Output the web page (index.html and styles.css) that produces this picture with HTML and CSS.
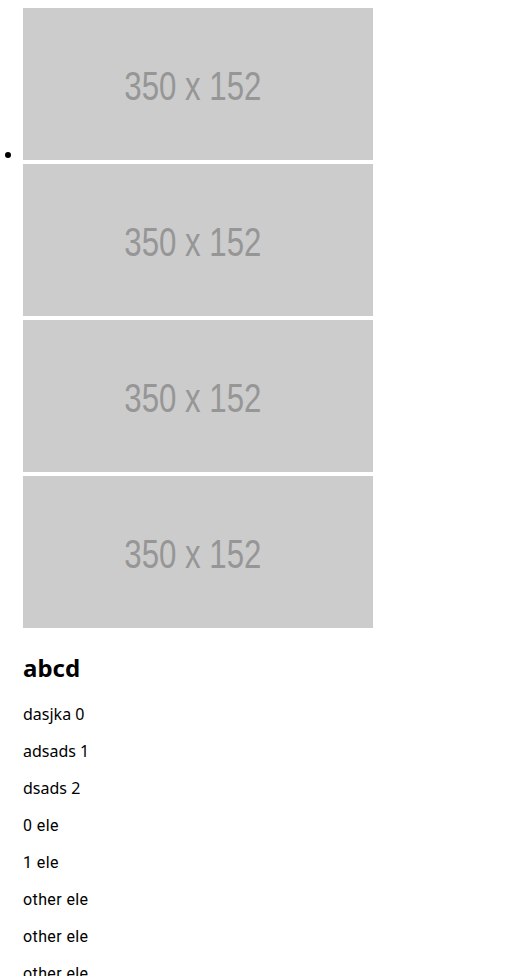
FILE: index.html
```html
<!DOCTYPE html>
<html>
<head>
<meta charset="utf-8">
<link rel="stylesheet" href="styles.css">
</head>
<body>
<div class="page">
<ul class="list">
  <li class="item"><span class="ph"><span class="ph-text">350 x 152</span></span><span class="ph"><span class="ph-text">350 x 152</span></span><span class="ph"><span class="ph-text">350 x 152</span></span><span class="ph"><span class="ph-text">350 x 152</span></span></li>
</ul>
<h2 class="title">abcd</h2>
<p class="line">dasjka 0</p>
<p class="line">adsads 1</p>
<p class="line">dsads 2</p>
<p class="line alt">0 ele</p>
<p class="line alt">1 ele</p>
<p class="line alt">other ele</p>
<p class="line alt">other ele</p>
<p class="line alt">other ele</p>
</div>
</body>
</html>
```
FILE: styles.css
```css
html, body {
  background: #ffffff;
}
body {
  margin: 0;
  padding: 8px;
  font-family: "Noto Sans", "Open Sans", sans-serif;
  font-size: 16px;
  color: #000;
}
.page {
  padding-left: 15px;
}
.list {
  margin: 0 0 16px 0;
  padding-left: 0;
  list-style: none;
  font-family: "Noto Sans", sans-serif;
  line-height: 19px;
}
.item {
  position: relative;
}
.item::before {
  content: "";
  position: absolute;
  left: -18px;
  top: 144px;
  width: 6px;
  height: 6px;
  border-radius: 50%;
  background: #000;
}
.ph {
  display: inline-block;
  box-sizing: border-box;
  overflow: hidden;
  width: 350px;
  height: 152px;
  padding-right: 10px;
  background: #cccccc;
  text-align: center;
  line-height: 156px;
  vertical-align: baseline;
}
.ph-text {
  display: inline-block;
  font-family: "Liberation Sans", Arial, sans-serif;
  font-size: 40px;
  color: #969696;
  transform: scaleX(0.78);
}
.title {
  font-size: 24px;
  font-weight: bold;
  margin: 20px 0 20px 0;
  line-height: 32px;
}
.line {
  margin: 16px 0;
  line-height: 21px;
}
.alt {
  font-family: Roboto, sans-serif;
  letter-spacing: 0.4px;
}
```
